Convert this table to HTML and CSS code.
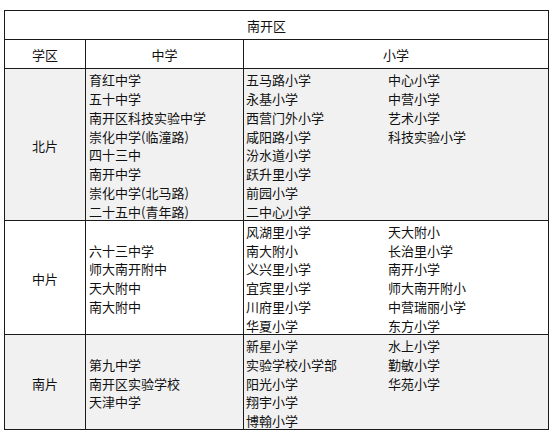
FILE: index.html
```html
<!DOCTYPE html>
<html lang="zh-CN">
<head>
<meta charset="utf-8">
<title>南开区学区划分</title>
<link rel="stylesheet" href="styles.css">
</head>
<body>
<table class="sched">
  <colgroup>
    <col class="c-area">
    <col class="c-mid">
    <col class="c-pri">
  </colgroup>
  <tr class="title-row"><th colspan="3" class="title">南开区</th></tr>
  <tr class="head-row"><th>学区</th><th>中学</th><th>小学</th></tr>
  <tr class="zone shaded">
    <td class="area"><div class="list"><div>北片</div></div></td>
    <td class="mid top"><div class="list">
      <div>育红中学</div><div>五十中学</div><div>南开区科技实验中学</div><div>崇化中学(临潼路)</div>
      <div>四十三中</div><div>南开中学</div><div>崇化中学(北马路)</div><div>二十五中(青年路)</div>
    </div></td>
    <td class="pri"><div class="pri-grid">
      <div class="list"><div>五马路小学</div><div>永基小学</div><div>西营门外小学</div><div>咸阳路小学</div><div>汾水道小学</div><div>跃升里小学</div><div>前园小学</div><div>二中心小学</div></div>
      <div class="list"><div>中心小学</div><div>中营小学</div><div>艺术小学</div><div>科技实验小学</div></div>
    </div></td>
  </tr>
  <tr class="zone">
    <td class="area"><div class="list"><div>中片</div></div></td>
    <td class="mid"><div class="list">
      <div>六十三中学</div><div>师大南开附中</div><div>天大附中</div><div>南大附中</div>
    </div></td>
    <td class="pri"><div class="pri-grid">
      <div class="list"><div>风湖里小学</div><div>南大附小</div><div>义兴里小学</div><div>宜宾里小学</div><div>川府里小学</div><div>华夏小学</div></div>
      <div class="list"><div>天大附小</div><div>长治里小学</div><div>南开小学</div><div>师大南开附小</div><div>中营瑞丽小学</div><div>东方小学</div></div>
    </div></td>
  </tr>
  <tr class="zone shaded">
    <td class="area"><div class="list"><div>南片</div></div></td>
    <td class="mid"><div class="list">
      <div>第九中学</div><div>南开区实验学校</div><div>天津中学</div>
    </div></td>
    <td class="pri"><div class="pri-grid">
      <div class="list"><div>新星小学</div><div>实验学校小学部</div><div>阳光小学</div><div>翔宇小学</div><div>博翰小学</div></div>
      <div class="list"><div>水上小学</div><div>勤敏小学</div><div>华苑小学</div></div>
    </div></td>
  </tr>
</table>
</body>
</html>
```

FILE: styles.css
```css
html, body {
  background: #ffffff;
}
body {
  margin: 10px 0 0 4px;
  font-family: "Noto Sans CJK SC", "Noto Sans", sans-serif;
  font-size: 13px;
  color: #111111;
}
.sched {
  border-collapse: collapse;
  table-layout: fixed;
  width: 544px;
}
.c-area { width: 81px; }
.c-mid { width: 158px; }
.c-pri { width: 305px; }
.sched th,
.sched td {
  border: 1px solid #1a1a1a;
  padding: 0;
}
.sched th {
  font-weight: normal;
  text-align: center;
  line-height: 26px;
  padding-top: 2px;
}
.title-row th {
  padding-right: 20px;
}
.zone td {
  line-height: 18.85px;
  vertical-align: middle;
}
.zone td.top,
.zone td.pri {
  vertical-align: top;
}
.shaded td {
  background: #f1f1f1;
}
.area {
  text-align: center;
}
.mid {
  padding-left: 3px;
}
.sched td.mid {
  padding-left: 3px;
}
.sched td.pri {
  padding-left: 2px;
}
.list {
  padding-top: 2px;
  margin-bottom: -2px;
  white-space: nowrap;
}
.pri-grid {
  display: grid;
  grid-template-columns: 142px 1fr;
  align-items: start;
}
```
